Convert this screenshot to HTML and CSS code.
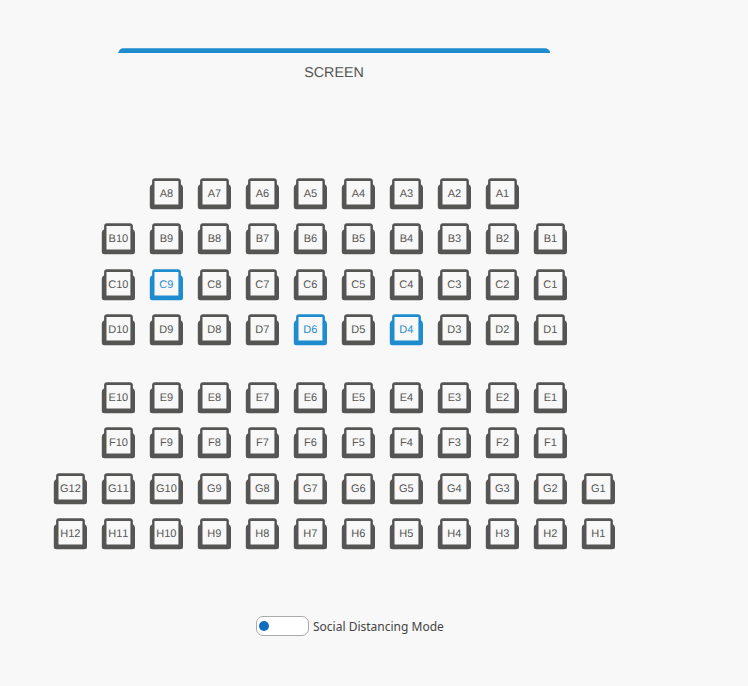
FILE: index.html
```html
<!DOCTYPE html>
<html lang="en">
<head>
<meta charset="utf-8">
<title>Seat selection</title>
<link rel="stylesheet" href="styles.css">
</head>
<body>
<main class="hall">
  <svg class="screen-bar" viewBox="0 0 432 5"><path d="M0 5V4.500Q1.500 0.200 5 0.200H427Q430.500 0.200 432 4.500V5Z"/></svg>
  <div class="screen-label">SCREEN</div>
  <div class="seats" id="seats"></div>
  <label class="mode"><span class="switch"><span class="knob"></span></span><span class="mode-text">Social Distancing Mode</span></label>
</main>
<script src="script.js"></script>
</body>
</html>
```
FILE: styles.css
```css
body {
  margin: 0;
  background: #f8f8f8;
  font-family: "Liberation Sans", Arial, sans-serif;
  color: #555654;
}
.hall {
  width: 668px;
  height: 686px;
  display: flex;
  flex-direction: column;
  align-items: center;
}
.screen-bar {
  display: block;
  width: 432.500px;
  height: 5px;
  margin-top: 48px;
  fill: #1f8ccf;
  flex: none;
}
.screen-label {
  margin-top: 12px;
  height: 16px;
  font-size: 14.300px;
  line-height: 16px;
  text-rendering: geometricPrecision;
}
.seats {
  margin-top: 96.600px;
  height: 388.400px;
}
.row {
  display: flex;
  justify-content: center;
  gap: 14px;
  height: 45.570px;
}
.row.aisle {
  height: 67.500px;
}
.seat {
  display: block;
  width: 34px;
  height: 33px;
  fill: #555654;
}
.seat.selected {
  fill: #1f8ccf;
}
.seat text {
  font-size: 11px;
  font-kerning: none;
  text-anchor: middle;
  text-rendering: geometricPrecision;
}
.seat .cushion {
  fill: #f8f8f8;
}
.mode {
  display: flex;
  align-items: center;
  gap: 4px;
  height: 20px;
  margin-top: 50px;
  margin-left: 32px;
}
.switch {
  box-sizing: border-box;
  display: flex;
  align-items: center;
  width: 53px;
  height: 20px;
  padding-left: 2px;
  border: 1px solid #aaa;
  border-radius: 7px;
  background: #fff;
}
.knob {
  width: 10px;
  height: 10px;
  border-radius: 50%;
  background: #106ebe;
}
.mode-text {
  width: 131px;
  padding-top: 1px;
  font: 12px/19px "Noto Sans", sans-serif;
  color: #444;
  white-space: nowrap;
}
```
FILE: script.js
```js
const rows = { A: 8, B: 10, C: 10, D: 10, E: 10, F: 10, G: 12, H: 12 };
const selected = ["C9", "D6", "D4"];

document.getElementById("seats").innerHTML = Object.entries(rows).map(([row, count]) => {
  let seats = "";
  for (let n = count; n > 0; n--) {
    const id = row + n;
    seats += `<svg class="seat${selected.includes(id) ? " selected" : ""}" viewBox="-0.400 0.200 34 33">
      <path d="M5.500 .4H28.500Q31.200 .4 31.500 3V6.500Q33.600 7.500 33.600 10V29Q33.600 31.500 31 31.500H3Q.4 31.500 .4 29V10Q.4 7.500 2.700 6.500V3Q2.900 .4 5.500 .4Z"/>
      <rect class="cushion" x="5.100" y="3.200" width="23.900" height="23.500"/>
      <text x="17" y="19.500">${id}</text>
    </svg>`;
  }
  return `<div class="row${row === "D" ? " aisle" : ""}">${seats}</div>`;
}).join("");
```
